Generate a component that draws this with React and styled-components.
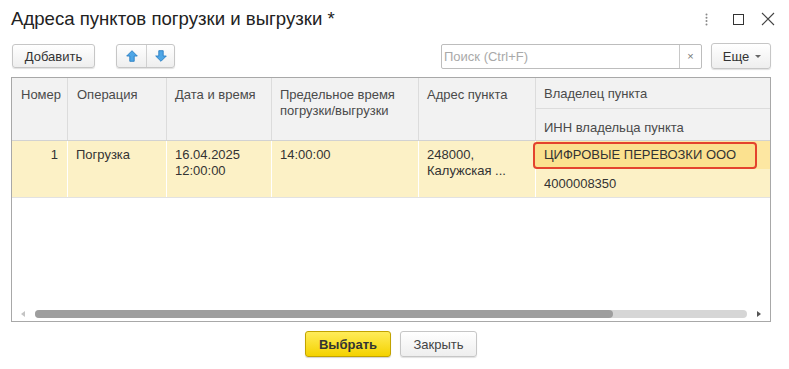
import React from "react";
import styled, { createGlobalStyle } from "styled-components";

const Global = createGlobalStyle`
  html, body { margin: 0; padding: 0; background: #fff; }
  body { font-family: "Liberation Sans", Arial, sans-serif; font-size: 13px; color: #333; }
  * { box-sizing: border-box; }
`;

const Window = styled.div`
  width: 789px;
  height: 369px;
  padding: 0 18px 0 11px;
  display: flex;
  flex-direction: column;
  background: #fff;
`;

const TitleBar = styled.div`
  height: 43px;
  display: flex;
  align-items: flex-start;
  justify-content: space-between;
`;

const Title = styled.h1`
  margin: 8px 0 0 0;
  font-size: 18.6px;
  line-height: 22px;
  font-weight: normal;
  color: #222;
`;

const WinControls = styled.div`
  display: flex;
  align-items: center;
  margin-top: 12px;
  margin-right: -4px;
`;

const Ctrl = styled.div`
  display: flex;
  margin-left: ${(p) => p.$ml || 0}px;
`;

const Toolbar = styled.div`
  height: 26px;
  display: flex;
  align-items: center;
  padding-left: 1px;
`;

const Button = styled.button`
  height: ${(p) => p.$h || 24}px;
  width: ${(p) => (p.$w ? `${p.$w}px` : "auto")};
  padding: 0 ${(p) => (p.$px == null ? 12 : p.$px)}px;
  font-family: "Liberation Sans", Arial, sans-serif;
  font-size: 13px;
  color: #333;
  background: linear-gradient(#ffffff, #eeeeee);
  border: 1px solid #c6c6c6;
  border-radius: 3px;
  box-shadow: 0 1px 1px rgba(0, 0, 0, 0.12);
  display: inline-flex;
  align-items: center;
  justify-content: center;
  gap: 6px;
  cursor: pointer;
`;

const ArrowGroup = styled.div`
  margin-left: 21px;
  display: flex;
  height: 24px;
  border: 1px solid #c6c6c6;
  border-radius: 3px;
  background: linear-gradient(#ffffff, #eeeeee);
  box-shadow: 0 1px 1px rgba(0, 0, 0, 0.12);
`;

const ArrowBtn = styled.div`
  width: ${(p) => p.$w}px;
  display: flex;
  align-items: center;
  justify-content: center;
  & + & { border-left: 1px solid #d0d0d0; }
`;

const Spacer = styled.div`
  flex: 1;
`;

const Search = styled.div`
  width: 261px;
  height: 25px;
  display: flex;
  border: 1px solid #bdbdbd;
  border-radius: 2px;
  background: #fff;
`;

const SearchInput = styled.div`
  flex: 1;
  padding-left: 2px;
  display: flex;
  align-items: center;
  color: #a9a9a9;
  font-size: 13px;
`;

const ClearBtn = styled.div`
  width: 22px;
  border-left: 1px solid #c8c8c8;
  display: flex;
  align-items: center;
  justify-content: center;
  color: #777;
  font-size: 11px;
`;

const MoreButton = styled(Button)`
  margin-left: 9px;
  width: 60px;
  padding: 0 0 0 2px;
`;

const Table = styled.div`
  margin-top: 8px;
  width: 760px;
  height: 245px;
  border: 1px solid #a8a8a8;
  display: flex;
  flex-direction: column;
  overflow: hidden;
`;

const COLS = "56px 99px 105px 147px 117px 280px";

const Head = styled.div`
  display: grid;
  grid-template-columns: ${COLS};
  grid-template-rows: 31px 31px;
  background: #f2f2f2;
  border-bottom: 1px solid #d2d2d2;
  color: #4a4a4a;
  line-height: 16px;
`;

const HeadCell = styled.div`
  grid-row: span 2;
  padding: 9px 8px 0 ${(p) => p.$pl || 8}px;
  border-right: 1px solid #dcdcdc;
  white-space: nowrap;
`;

const HeadSub = styled.div`
  padding: ${(p) => p.$pt}px 8px 0 8px;
  border-bottom: ${(p) => (p.$top ? "1px solid #dcdcdc" : "none")};
  white-space: nowrap;
`;

const Row = styled.div`
  display: grid;
  grid-template-columns: ${COLS};
  height: 57px;
  background: #fcf1c6;
  border-bottom: 1px solid #e2e2e2;
  line-height: 16px;
  color: #333;
`;

const Cell = styled.div`
  padding: 6px ${(p) => p.$pr || 8}px 0 8px;
  border-right: 1px solid #ffffff;
  text-align: ${(p) => p.$align || "left"};
  white-space: nowrap;
`;

const StackCell = styled.div`
  display: flex;
  flex-direction: column;
`;

const FocusLine = styled.div`
  height: 28px;
  background: #fde7a2;
`;

const FocusBox = styled.div`
  position: relative;
  z-index: 1;
  margin: 1px 0 0 -3px;
  width: 224px;
  height: 27px;
  border: 2px solid #e4432d;
  border-radius: 4px;
  background: #fbe18f;
  padding: 3px 9px;
  white-space: nowrap;
`;

const SubLine = styled.div`
  padding: 7px 8px 0 8px;
`;

const Empty = styled.div`
  flex: 1;
`;

const ScrollRow = styled.div`
  height: 16px;
  display: flex;
  align-items: center;
  padding: 2px 9px 0 9px;
`;

const Tri = styled.div`
  width: 0;
  height: 0;
  border-top: 3px solid transparent;
  border-bottom: 3px solid transparent;
  ${(p) =>
    p.$dir === "left"
      ? `border-right: 4px solid ${p.$c};`
      : `border-left: 4px solid ${p.$c};`}
`;

const Track = styled.div`
  flex: 1;
  margin: 0 10px;
  height: 8px;
  border-radius: 4px;
  background: #d6d6d6;
  display: flex;
`;

const Thumb = styled.div`
  height: 8px;
  border-radius: 4px;
  background: #9e9e9e;
`;

const Footer = styled.div`
  width: 760px;
  margin-top: 9px;
  display: flex;
  justify-content: center;
  gap: 9px;
`;

const PrimaryButton = styled(Button)`
  height: 26px;
  width: 86px;
  font-weight: bold;
  color: #333;
  background: linear-gradient(#ffec5a, #f4d200);
  border-color: #c2a300;
  box-shadow: 0 1px 1px rgba(0, 0, 0, 0.18);
`;

const SecondaryButton = styled(Button)`
  height: 26px;
  width: 77px;
  color: #444;
`;

const Caret = styled.span`
  width: 0;
  height: 0;
  border-left: 3px solid transparent;
  border-right: 3px solid transparent;
  border-top: 3px solid #666;
  margin-top: 1px;
`;

const UpArrow = () => (
  <svg width="12" height="12" viewBox="0 0 12 12">
    <path d="M6 0.7 L11.3 6 H8.2 V11.3 H3.8 V6 H0.7 Z" fill="#4ea6e6" stroke="#2a7fc4" strokeWidth="0.9" strokeLinejoin="round" />
  </svg>
);

const DownArrow = () => (
  <svg width="12" height="12" viewBox="0 0 12 12">
    <path d="M6 11.3 L11.3 6 H8.2 V0.7 H3.8 V6 H0.7 Z" fill="#4ea6e6" stroke="#2a7fc4" strokeWidth="0.9" strokeLinejoin="round" />
  </svg>
);

const DotsIcon = () => (
  <svg width="3" height="13" viewBox="0 0 3 13">
    <circle cx="1.5" cy="1.5" r="1" fill="#888" />
    <circle cx="1.5" cy="4.8" r="1" fill="#888" />
    <circle cx="1.5" cy="8.1" r="1" fill="#888" />
    <circle cx="1.5" cy="11.4" r="1" fill="#888" />
  </svg>
);

const MaxIcon = () => (
  <svg width="11" height="11" viewBox="0 0 11 11">
    <rect x="0.5" y="0.5" width="10" height="10" fill="none" stroke="#333" strokeWidth="1" />
  </svg>
);

const CloseIcon = () => (
  <svg width="14" height="14" viewBox="0 0 14 14">
    <path d="M1 1 L13 13 M13 1 L1 13" stroke="#444" strokeWidth="1.1" />
  </svg>
);

export default function App() {
  return (
    <>
      <Global />
      <Window>
        <TitleBar>
          <Title>Адреса пунктов погрузки и выгрузки *</Title>
          <WinControls>
            <Ctrl><DotsIcon /></Ctrl>
            <Ctrl $ml={25}><MaxIcon /></Ctrl>
            <Ctrl $ml={17}><CloseIcon /></Ctrl>
          </WinControls>
        </TitleBar>

        <Toolbar>
          <Button $px={0} $w={83}>Добавить</Button>
          <ArrowGroup>
            <ArrowBtn $w={29}><UpArrow /></ArrowBtn>
            <ArrowBtn $w={28}><DownArrow /></ArrowBtn>
          </ArrowGroup>
          <Spacer />
          <Search>
            <SearchInput>Поиск (Ctrl+F)</SearchInput>
            <ClearBtn>×</ClearBtn>
          </Search>
          <MoreButton $h={26}>
            Еще <Caret />
          </MoreButton>
        </Toolbar>

        <Table>
          <Head>
            <HeadCell $pl={9}>Номер</HeadCell>
            <HeadCell $pl={9}>Операция</HeadCell>
            <HeadCell>Дата и время</HeadCell>
            <HeadCell>
              Предельное время
              <br />
              погрузки/выгрузки
            </HeadCell>
            <HeadCell>Адрес пункта</HeadCell>
            <HeadSub $top $pt={8}>Владелец пункта</HeadSub>
            <HeadSub $pt={11}>ИНН владельца пункта</HeadSub>
          </Head>

          <Row>
            <Cell $align="right" $pr={9}>1</Cell>
            <Cell>Погрузка</Cell>
            <Cell>
              16.04.2025
              <br />
              12:00:00
            </Cell>
            <Cell>14:00:00</Cell>
            <Cell>
              248000,
              <br />
              Калужская ...
            </Cell>
            <StackCell>
              <FocusLine>
                <FocusBox>ЦИФРОВЫЕ ПЕРЕВОЗКИ ООО</FocusBox>
              </FocusLine>
              <SubLine>4000008350</SubLine>
            </StackCell>
          </Row>

          <Empty />

          <ScrollRow>
            <Tri $dir="left" $c="#c4c4c4" />
            <Track>
              <Thumb style={{ width: "81.2%" }} />
            </Track>
            <Tri $dir="right" $c="#555" />
          </ScrollRow>
        </Table>

        <Footer>
          <PrimaryButton>Выбрать</PrimaryButton>
          <SecondaryButton>Закрыть</SecondaryButton>
        </Footer>
      </Window>
    </>
  );
}
